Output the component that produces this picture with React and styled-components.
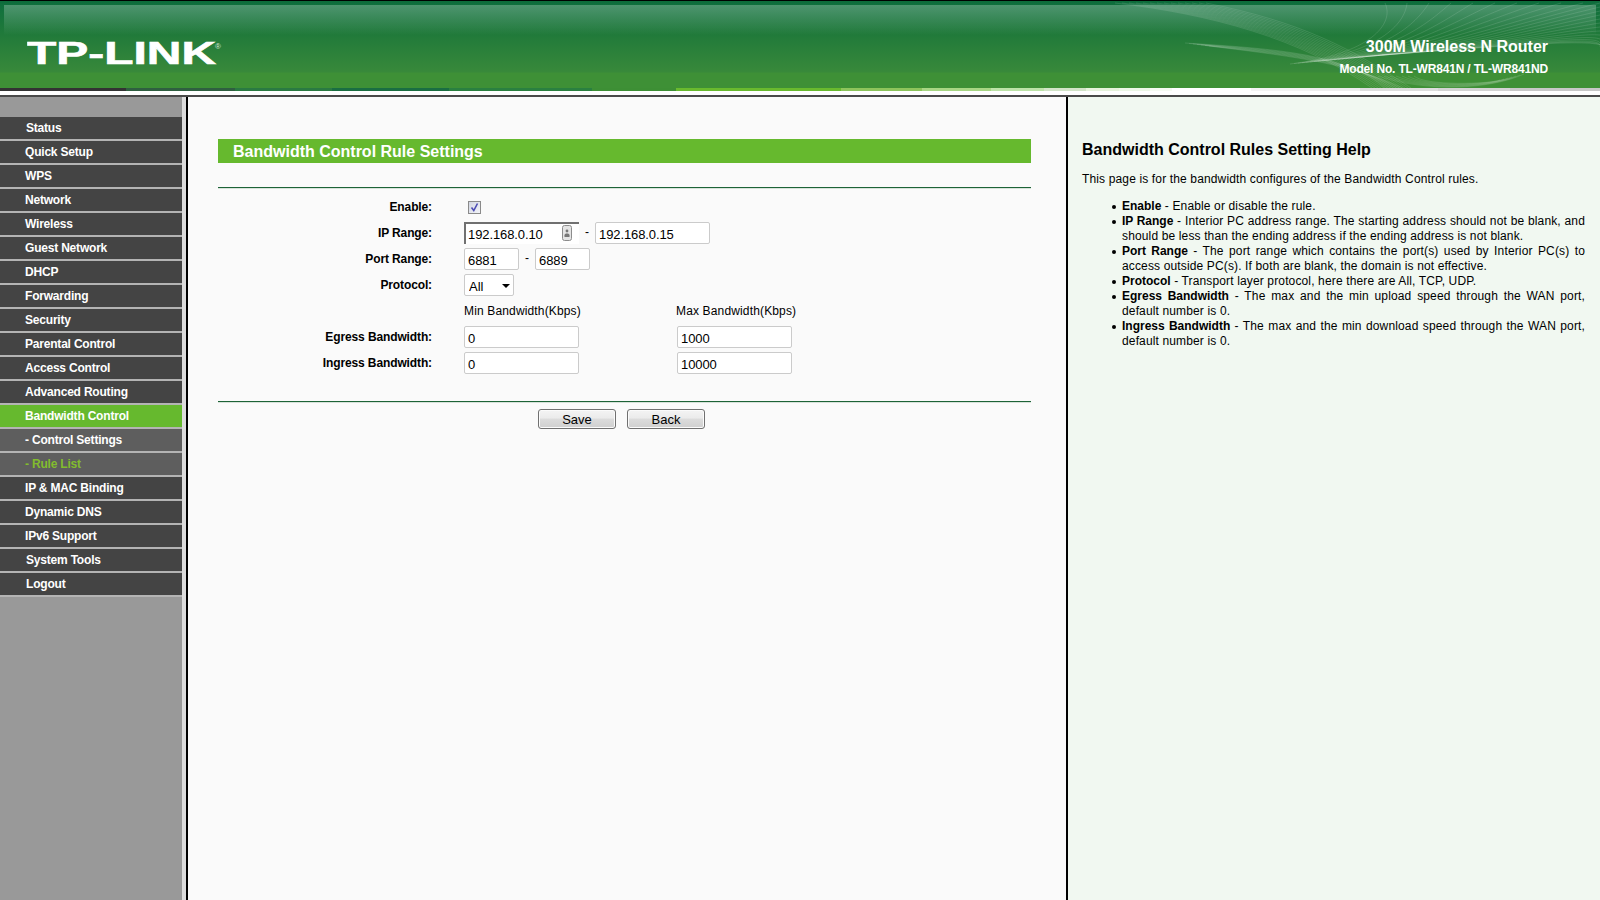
import { createGlobalStyle } from 'styled-components'
import styled from 'styled-components'

const GlobalStyle = createGlobalStyle`
  html, body {
    margin: 0;
    padding: 0;
    background: #fafafa;
  }
  body {
    font-family: "Liberation Sans", Arial, sans-serif;
    font-size: 12px;
    color: #000;
  }
  * {
    box-sizing: border-box;
  }
`

const Page = styled.div`
  width: 1600px;
  height: 900px;
  overflow: hidden;
  display: flex;
  flex-direction: column;
`

const Header = styled.header`
  position: relative;
  flex: 0 0 88px;
  display: flex;
  align-items: flex-start;
  justify-content: space-between;
  padding: 42px 52px 0 27px;
  background: linear-gradient(
    180deg,
    #000 0,
    #000 1px,
    #0c6a3a 1px,
    #10703d 5px,
    #217a3a 35px,
    #38893a 72px,
    #3e9036 73px,
    #3e9036 88px
  );

  &::before {
    content: '';
    position: absolute;
    top: 5px;
    left: 4px;
    right: 4px;
    height: 30px;
    background: linear-gradient(180deg, rgba(255, 255, 255, 0.26), rgba(255, 255, 255, 0));
  }
`

const Curves = styled.svg`
  position: absolute;
  top: 0;
  left: 0;
  pointer-events: none;
`

const Logo = styled.svg`
  position: relative;
  display: block;
  margin-top: -6px;
`

const Product = styled.div`
  position: relative;
  text-align: right;
  color: #fff;
  font-weight: bold;
`

const ProductName = styled.div`
  font-size: 16px;
  line-height: 18px;
  margin-top: -4px;
`

const ModelNo = styled.div`
  font-size: 12px;
  line-height: 14px;
  margin-top: 6px;
  letter-spacing: -0.17px;
`

const ColorStrip = styled.div`
  flex: 0 0 3px;
  background: linear-gradient(
    90deg,
    #333 0 126px,
    #2f5f40 126px 235px,
    #2a7a42 235px 332px,
    #1a6e42 332px 449px,
    #2a8040 449px 592px,
    #3d8f35 592px 676px,
    #69ba2e 676px 841px,
    #8dc45c 841px 922px,
    #a8d684 922px 991px,
    #bde3a8 991px 1044px,
    #d2e4c8 1044px 1086px,
    #e6f3dc 1086px 1119px,
    #ecf7e6 1119px 1150px,
    #f5fbf2 1150px 1172px,
    #fff 1172px 1251px,
    #f4f4f4 1251px 1310px,
    #eee 1310px 1360px,
    #dedede 1360px 1438px,
    #d4d4d4 1438px 1510px,
    #c8c8c8 1510px
  );
`

const HeaderGap = styled.div`
  flex: 0 0 6px;
  background: #fff;
  border-bottom: 2px solid #4a4a4a;
`

const Body = styled.div`
  flex: 1;
  display: flex;
  min-height: 0;
`

const Sidebar = styled.nav`
  flex: 0 0 188px;
  padding-top: 20px;
  background: linear-gradient(90deg, #999 182px, #dcdcdc 182px);
  border-right: 2px solid #000;
`

const MenuItem = styled.a`
  display: block;
  width: 182px;
  height: 24px;
  padding-left: ${p => (p.$shifted ? 26 : 25)}px;
  border-bottom: 2px solid #b4b4b4;
  font-weight: bold;
  font-size: 12px;
  line-height: 22px;
  letter-spacing: -0.2px;
  color: ${p => (p.$current ? '#82bc2e' : '#fff')};
  background: ${p => (p.$active ? '#66b92e' : p.$sub ? '#5e5e5e' : '#444')};
`

const Main = styled.main`
  flex: 0 0 880px;
  padding: 42px 35px 0 30px;
  background: #fafafa;
  border-right: 2px solid #000;
`

const TitleBar = styled.h1`
  margin: 0;
  height: 24px;
  padding-left: 15px;
  background: #66b92e;
  color: #fff;
  font-size: 16px;
  line-height: 25px;
  font-weight: bold;
`

const Rule = styled.hr`
  margin: 0;
  border: 0;
  height: 2px;
  background: linear-gradient(180deg, #1d6337 50%, #d7e2da 50%);
`

const FormRule = styled(Rule)`
  margin-top: 24px;
`

const BottomRule = styled(Rule)`
  margin-top: 25px;
`

const Form = styled.form`
  padding-top: 5px;
`

const Row = styled.div`
  display: flex;
  align-items: center;
  height: 26px;
`

const Label = styled.label`
  flex: 0 0 214px;
  text-align: right;
  font-weight: bold;
  letter-spacing: -0.12px;
`

const Fields = styled.div`
  display: flex;
  align-items: center;
  margin-left: 32px;
`

const Column = styled.div`
  flex: 0 0 213px;
`

const ColumnTitle = styled.span`
  font-size: 12px;
  letter-spacing: 0.15px;
`

const MaxTitle = styled(ColumnTitle)`
  margin-left: -1px;
`

const Dash = styled.span`
  width: 16px;
  text-align: center;
  font-size: 12px;
  margin-top: -3px;
`

const TextInput = styled.input`
  display: block;
  width: ${p => p.$width || 115}px;
  height: 22px;
  padding: 2px 3px 0;
  border: 1px solid #cbcbcb;
  border-radius: 2px;
  background: #fff;
  outline: none;
  font-family: "Liberation Sans", Arial, sans-serif;
  font-size: 13px;
  letter-spacing: -0.1px;
  color: #000;
`

const FocusWrap = styled.div`
  position: relative;
`

const FocusInput = styled(TextInput)`
  border-width: 2px 0 0 2px;
  border-color: #707070;
  border-radius: 0;
  padding: 1px 2px 0;
`

const PassIcon = styled.svg`
  position: absolute;
  top: 3px;
  right: 7px;
`

const CheckBox = styled.span`
  display: block;
  width: 13px;
  height: 13px;
  margin: 1px 0 0 4px;
  border: 1px solid #8a8a8a;
  background: linear-gradient(135deg, #d3d7e2, #f2f3f8);
`

const CheckMark = styled.svg`
  display: block;
`

const SelectWrap = styled.div`
  position: relative;
  width: 50px;
  height: 22px;

  &::after {
    content: '';
    position: absolute;
    top: 10px;
    right: 4px;
    border-style: solid;
    border-width: 4px 4px 0;
    border-color: #000 transparent transparent;
    pointer-events: none;
  }
`

const Select = styled.select`
  display: block;
  width: 100%;
  height: 100%;
  padding: 2px 0 0 4px;
  border: 1px solid #cbcbcb;
  border-radius: 2px;
  background: #fff;
  appearance: none;
  outline: none;
  font-family: "Liberation Sans", Arial, sans-serif;
  font-size: 13px;
  color: #000;
`

const Buttons = styled.div`
  display: flex;
  gap: 11px;
  padding: 6px 0 0 320px;
`

const Button = styled.button`
  width: 78px;
  height: 20px;
  padding: 1px 0 0;
  border: 1px solid #707070;
  border-radius: 3px;
  background: linear-gradient(180deg, #f4f4f4 0, #ebebeb 45%, #dcdcdc 50%, #cfcfcf 100%);
  box-shadow: inset 0 0 0 1px #fbfbfb;
  font-family: "Liberation Sans", Arial, sans-serif;
  font-size: 13px;
  color: #000;
`

const Help = styled.aside`
  flex: 1;
  padding: 44px 15px 0 14px;
  background: #f1f8f1;
`

const HelpTitle = styled.h2`
  margin: 0;
  font-size: 16px;
  line-height: 18px;
  font-weight: bold;
`

const HelpIntro = styled.p`
  margin: 13px 0 0;
  line-height: 15px;
  letter-spacing: 0.14px;
`

const HelpList = styled.ul`
  margin: 12px 0 0;
  padding: 0 0 0 40px;
  list-style: none;
  line-height: 15px;
  letter-spacing: 0.14px;
  text-align: justify;
`

const HelpItem = styled.li`
  position: relative;

  &::before {
    content: '';
    position: absolute;
    top: 6px;
    left: -10px;
    width: 4px;
    height: 4px;
    border-radius: 50%;
    background: #000;
  }
`

const Term = styled.b`
  letter-spacing: 0;
`

const menu = [
  { name: 'Status', shifted: true },
  { name: 'Quick Setup' },
  { name: 'WPS' },
  { name: 'Network' },
  { name: 'Wireless' },
  { name: 'Guest Network' },
  { name: 'DHCP' },
  { name: 'Forwarding' },
  { name: 'Security' },
  { name: 'Parental Control' },
  { name: 'Access Control' },
  { name: 'Advanced Routing' },
  { name: 'Bandwidth Control', active: true },
  { name: '- Control Settings', sub: true },
  { name: '- Rule List', sub: true, current: true },
  { name: 'IP & MAC Binding' },
  { name: 'Dynamic DNS' },
  { name: 'IPv6 Support' },
  { name: 'System Tools', shifted: true },
  { name: 'Logout', shifted: true },
]

const helpItems = [
  ['Enable', ' - Enable or disable the rule.'],
  ['IP Range', ' - Interior PC address range. The starting address should not be blank, and should be less than the ending address if the ending address is not blank.'],
  ['Port Range', ' - The port range which contains the port(s) used by Interior PC(s) to access outside PC(s). If both are blank, the domain is not effective.'],
  ['Protocol', ' - Transport layer protocol, here there are All, TCP, UDP.'],
  ['Egress Bandwidth', ' - The max and the min upload speed through the WAN port, default number is 0.'],
  ['Ingress Bandwidth', ' - The max and the min download speed through the WAN port, default number is 0.'],
]

// the wave lines in the banner
const range = n => Array.from({ length: n }, (_, i) => i)

const wavePaths = [
  ...range(14).map(i => `M${1115 + i * 7} 3C${1210 + i * 7} ${14 + i * 0.6},${1300 + i * 4} ${38 + i * 0.8},${1372 + i * 3} 88`),
  ...range(7).map(i => `M${1185 + i * 4} ${43 + i * 0.5}C1280 ${49 + i},1345 ${54 + i * 1.2},${1385 + i * 3} 88`),
  ...range(24).map(i => {
    const end = i < 10 ? `${1385 + i * 22} 3` : `1600 ${3 + (i - 10) * 4}`
    return `M${1290 + i * 4} ${64 - i * 0.4}C${1370 + i * 8} ${54 - i * 0.5},${1395 + i * 10} ${24 + i * 0.5},${end}`
  }),
  ...range(7).map(i => `M${1378 + i * 6} 76C1425 ${92 - i},1490 ${90 - i},${1524 - i * 4} ${74 + i}`),
]

const App = () => (
  <Page>
    <GlobalStyle />
    <Header>
      <Curves width="1600" height="88" viewBox="0 0 1600 88" fill="none" stroke="#fff" strokeOpacity="0.2" strokeWidth="0.6">
        {wavePaths.map(d => <path key={d} d={d} />)}
      </Curves>
      <Logo width="196" height="36" viewBox="0 0 196 36">
        <text
          x="0"
          y="28"
          fontFamily="'Liberation Sans', Arial, sans-serif"
          fontWeight="bold"
          fontSize="31"
          textLength="189"
          lengthAdjust="spacingAndGlyphs"
          fill="#fff"
          stroke="#fff"
          strokeWidth="0.6"
        >
          TP-LINK
        </text>
        <text x="188" y="13" fontFamily="'Liberation Sans', Arial, sans-serif" fontSize="8" fill="#d8e8d8">®</text>
      </Logo>
      <Product>
        <ProductName>300M Wireless N Router</ProductName>
        <ModelNo>Model No. TL-WR841N / TL-WR841ND</ModelNo>
      </Product>
    </Header>
    <ColorStrip />
    <HeaderGap />
    <Body>
      <Sidebar>
        {menu.map(item => (
          <MenuItem
            key={item.name}
            $shifted={item.shifted}
            $active={item.active}
            $sub={item.sub}
            $current={item.current}
          >
            {item.name}
          </MenuItem>
        ))}
      </Sidebar>
      <Main>
        <TitleBar>Bandwidth Control Rule Settings</TitleBar>
        <FormRule />
        <Form onSubmit={e => e.preventDefault()}>
          <Row>
            <Label>Enable:</Label>
            <Fields>
              <CheckBox>
                <CheckMark width="11" height="11" viewBox="0 0 11 11" fill="none">
                  <path d="M2.5 5.5 4.8 8.5 8.5 1.5" stroke="#4c4cb4" strokeWidth="1.6" />
                </CheckMark>
              </CheckBox>
            </Fields>
          </Row>
          <Row>
            <Label>IP Range:</Label>
            <Fields>
              <FocusWrap>
                <FocusInput defaultValue="192.168.0.10" />
                <PassIcon width="10" height="16" viewBox="0 0 10 16">
                  <rect x="0.5" y="0.5" width="9" height="15" rx="2" fill="#e4e4e4" stroke="#8c8c8c" />
                  <circle cx="5" cy="6" r="1.4" fill="#777" />
                  <path d="M2.5 12V10.2C2.5 9.2 3.5 8.6 5 8.6S7.5 9.2 7.5 10.2V12Z" fill="#777" />
                </PassIcon>
              </FocusWrap>
              <Dash>-</Dash>
              <TextInput defaultValue="192.168.0.15" />
            </Fields>
          </Row>
          <Row>
            <Label>Port Range:</Label>
            <Fields>
              <TextInput $width={55} defaultValue="6881" />
              <Dash>-</Dash>
              <TextInput $width={55} defaultValue="6889" />
            </Fields>
          </Row>
          <Row>
            <Label>Protocol:</Label>
            <Fields>
              <SelectWrap>
                <Select defaultValue="All">
                  <option>All</option>
                  <option>TCP</option>
                  <option>UDP</option>
                </Select>
              </SelectWrap>
            </Fields>
          </Row>
          <Row>
            <Label />
            <Fields>
              <Column><ColumnTitle>Min Bandwidth(Kbps)</ColumnTitle></Column>
              <Column><MaxTitle>Max Bandwidth(Kbps)</MaxTitle></Column>
            </Fields>
          </Row>
          <Row>
            <Label>Egress Bandwidth:</Label>
            <Fields>
              <Column><TextInput defaultValue="0" /></Column>
              <Column><TextInput defaultValue="1000" /></Column>
            </Fields>
          </Row>
          <Row>
            <Label>Ingress Bandwidth:</Label>
            <Fields>
              <Column><TextInput defaultValue="0" /></Column>
              <Column><TextInput defaultValue="10000" /></Column>
            </Fields>
          </Row>
          <BottomRule />
          <Buttons>
            <Button type="submit">Save</Button>
            <Button type="button">Back</Button>
          </Buttons>
        </Form>
      </Main>
      <Help>
        <HelpTitle>Bandwidth Control Rules Setting Help</HelpTitle>
        <HelpIntro>This page is for the bandwidth configures of the Bandwidth Control rules.</HelpIntro>
        <HelpList>
          {helpItems.map(([term, text]) => (
            <HelpItem key={term}><Term>{term}</Term>{text}</HelpItem>
          ))}
        </HelpList>
      </Help>
    </Body>
  </Page>
)

export default App
